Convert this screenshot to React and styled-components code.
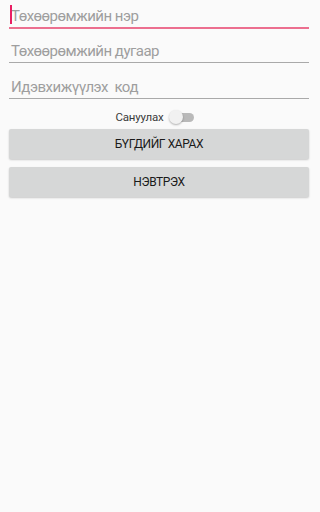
import React from 'react'
import styled, { createGlobalStyle } from 'styled-components'

const GlobalStyle = createGlobalStyle`
    html, body {
        margin: 0;
        padding: 0;
        background: #fafafa;
        font-family: Roboto, "Liberation Sans", sans-serif;
    }
`;

const Container = styled.div`
    width: 320px;
    height: 512px;
    background: #fafafa;
    padding: 4px 11px 0 9px;
    box-sizing: border-box;
    display: flex;
    flex-direction: column;
`;

const Field = styled.div`
    position: relative;
    height: ${(props) => props.h || "34px"};
    display: flex;
    align-items: flex-end;
    border-bottom: ${(props) => props.active ? "2px solid #ec6f8f" : "1px solid #a9a9a9"};
    padding-bottom: 2px;
    box-sizing: border-box;
`;

const Placeholder = styled.span`
    font-size: 15px;
    color: #9e9e9e;
    padding-left: 2px;
    line-height: 18px;
    letter-spacing: -0.5px;
    white-space: pre;
`;

const Cursor = styled.span`
    position: absolute;
    left: 1px;
    top: 1px;
    width: 1.5px;
    height: 19px;
    background: #e91e63;
`;

const SwitchRow = styled.div`
    display: flex;
    justify-content: center;
    align-items: center;
    margin-top: 10px;
    height: 16px;
    gap: 4px;
    padding-right: 9px;
`;

const SwitchLabel = styled.span`
    font-size: 11.5px;
    letter-spacing: -0.2px;
    color: #3a3a3a;
`;

const Track = styled.div`
    position: relative;
    width: 21px;
    height: 9px;
    border-radius: 5px;
    background: #b9b9b9;
    margin-left: 5px;
`;

const Thumb = styled.div`
    position: absolute;
    left: -4px;
    top: -2.5px;
    width: 14px;
    height: 14px;
    border-radius: 50%;
    background: #f1f1f1;
    box-shadow: 0 1px 2px rgba(0, 0, 0, 0.3);
`;

const Button = styled.button`
    margin-top: ${(props) => props.gap || "7px"};
    height: 30px;
    width: 100%;
    border: none;
    border-radius: 2px;
    background: #d6d7d7;
    box-shadow: 0 1px 2px rgba(0, 0, 0, 0.2);
    font-family: Roboto, "Liberation Sans", sans-serif;
    font-size: 12px;
    font-weight: 400;
    color: #1a1a1a;
    letter-spacing: -0.4px;
    padding: 0;
`;

const App = () => {
  return (
    <Container>
        <GlobalStyle/>
        <Field h="25px" active>
            <Cursor/>
            <Placeholder>Төхөөрөмжийн нэр</Placeholder>
        </Field>
        <Field h="34px">
            <Placeholder>Төхөөрөмжийн дугаар</Placeholder>
        </Field>
        <Field h="36px">
            <Placeholder>Идэвхижүүлэх  код</Placeholder>
        </Field>
        <SwitchRow>
            <SwitchLabel>Сануулах</SwitchLabel>
            <Track><Thumb/></Track>
        </SwitchRow>
        <Button gap="4px">БҮГДИЙГ ХАРАХ</Button>
        <Button gap="8px">НЭВТРЭХ</Button>
    </Container>
  )
}

export default App
